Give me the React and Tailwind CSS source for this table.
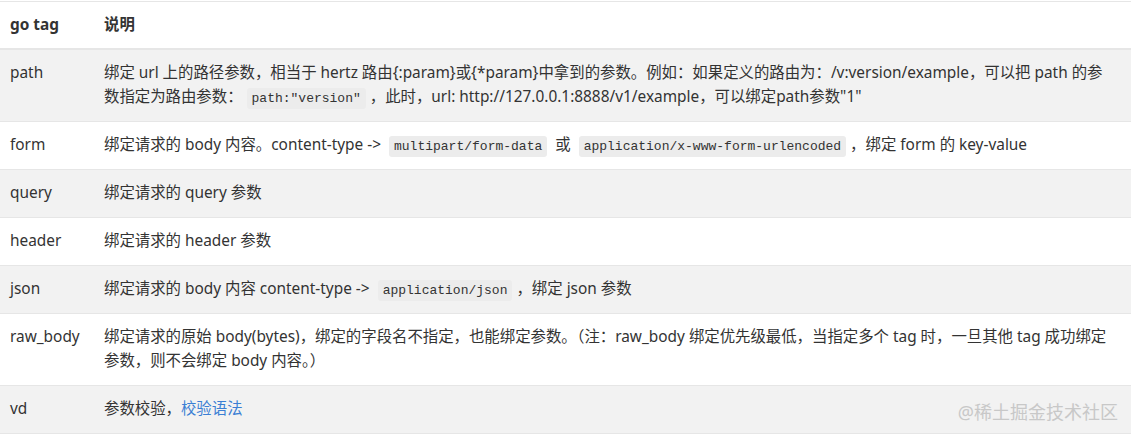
import React from 'react'

const Code = ({ children }) => (
    <code className="mx-1 rounded-[3px] bg-[#ececec] px-[5px] py-[3px] font-['Liberation_Mono','DejaVu_Sans_Mono',monospace] text-[13px] leading-none text-[#333]">
        {children}
    </code>
)

const rows = [
    {
        tag: 'path',
        desc: (
            <>
                绑定 url 上的路径参数，相当于 hertz 路由{'{'}:param{'}'}或{'{'}*param{'}'}中拿到的参数。例如：如果定义的路由为：/v:version/example，可以把 path 的参数指定为路由参数：
                <Code>path:"version"</Code>，此时，url: http://127.0.0.1:8888/v1/example，可以绑定path参数"1"
            </>
        ),
    },
    {
        tag: 'form',
        desc: (
            <>
                绑定请求的 body 内容。content-type -&gt; <Code>multipart/form-data</Code> 或 <Code>application/x-www-form-urlencoded</Code>，绑定 form 的 key-value
            </>
        ),
    },
    { tag: 'query', desc: '绑定请求的 query 参数' },
    { tag: 'header', desc: '绑定请求的 header 参数' },
    {
        tag: 'json',
        desc: (
            <>
                绑定请求的 body 内容 content-type -&gt; <Code>application/json</Code>，绑定 json 参数
            </>
        ),
    },
    {
        tag: 'raw_body',
        desc: '绑定请求的原始 body(bytes)，绑定的字段名不指定，也能绑定参数。（注：raw_body 绑定优先级最低，当指定多个 tag 时，一旦其他 tag 成功绑定参数，则不会绑定 body 内容。）',
    },
    {
        tag: 'vd',
        desc: (
            <>
                参数校验，<a className="text-[#3b7fd4]">校验语法</a>
            </>
        ),
    },
]

export default function App() {
    return (
        <div className="relative h-[436px] w-[1136px] overflow-hidden bg-white pt-[1px] font-['Noto_Sans','Noto_Sans_CJK_SC',sans-serif] text-[15.4px] leading-6 text-[#333]">
            <table className="w-[1131px] border-collapse border-t border-[#e6e6e6]">
                <thead>
                    <tr className="border-b-2 border-[#e6e6e6] bg-white">
                        <th className="w-[94px] pt-[11px] pb-[11px] pl-[10px] text-left font-bold">go tag</th>
                        <th className="pt-[11px] pb-[11px] pl-[10px] text-left font-bold">说明</th>
                    </tr>
                </thead>
                <tbody>
                    {rows.map((row, i) => (
                        <tr key={row.tag} className={`border-b border-[#e6e6e6] ${i % 2 === 0 ? 'bg-[#f2f2f2]' : 'bg-white'}`}>
                            <td className="w-[94px] pt-[11px] pb-3 pl-[10px] align-top">{row.tag}</td>
                            <td className="pt-[11px] pb-3 pl-[10px] pr-4 align-top">{row.desc}</td>
                        </tr>
                    ))}
                </tbody>
            </table>
            <div className="absolute right-[18px] bottom-[12px] text-[18px] text-[#c8c8c8]">@稀土掘金技术社区</div>
        </div>
    )
}
